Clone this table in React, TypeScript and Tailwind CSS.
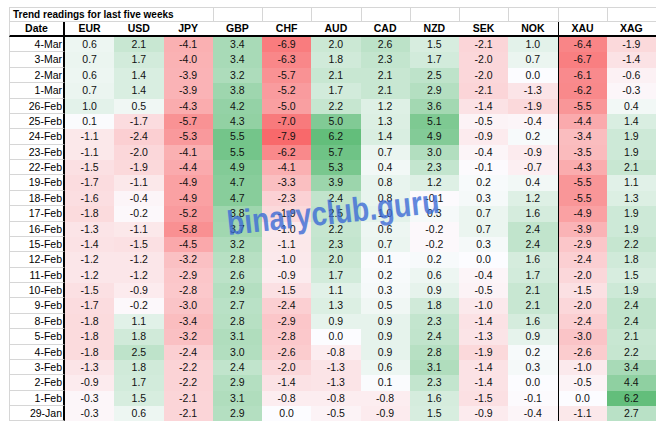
const currencies = ["EUR", "USD", "JPY", "GBP", "CHF", "AUD", "CAD", "NZD", "SEK", "NOK", "XAU", "XAG"];

const rows: [string, number[]][] = [
  ["4-Mar", [0.6, 2.1, -4.1, 3.4, -6.9, 2.0, 2.6, 1.5, -2.1, 1.0, -6.4, -1.9]],
  ["3-Mar", [0.7, 1.7, -4.0, 3.4, -6.3, 1.8, 2.3, 1.7, -2.0, 0.7, -6.7, -1.4]],
  ["2-Mar", [0.6, 1.4, -3.9, 3.2, -5.7, 2.1, 2.1, 2.5, -2.0, 0.0, -6.1, -0.6]],
  ["1-Mar", [0.7, 1.4, -3.9, 3.8, -5.2, 1.7, 2.1, 2.9, -2.1, -1.3, -6.2, -0.3]],
  ["26-Feb", [1.0, 0.5, -4.3, 4.2, -5.0, 2.2, 1.2, 3.6, -1.4, -1.9, -5.5, 0.4]],
  ["25-Feb", [0.1, -1.7, -5.7, 4.3, -7.0, 5.0, 1.3, 5.1, -0.5, -0.4, -4.4, 1.4]],
  ["24-Feb", [-1.1, -2.4, -5.3, 5.5, -7.9, 6.2, 1.4, 4.9, -0.9, 0.2, -3.4, 1.9]],
  ["23-Feb", [-1.1, -2.0, -4.1, 5.5, -6.2, 5.7, 0.7, 3.0, -0.4, -0.9, -3.5, 1.9]],
  ["22-Feb", [-1.5, -1.9, -4.4, 4.9, -4.1, 5.3, 0.4, 2.3, -0.1, -0.7, -4.3, 2.1]],
  ["19-Feb", [-1.7, -1.1, -4.9, 4.7, -3.3, 3.9, 0.8, 1.2, 0.2, 0.4, -5.5, 1.1]],
  ["18-Feb", [-1.6, -0.4, -4.9, 4.7, -2.3, 2.4, 0.8, -0.1, 0.3, 1.2, -5.5, 1.3]],
  ["17-Feb", [-1.8, -0.2, -5.2, 3.8, -1.9, 2.5, 1.0, 0.3, 0.7, 1.6, -4.9, 1.9]],
  ["16-Feb", [-1.3, -1.1, -5.8, 3.7, -1.0, 2.2, 0.6, -0.2, 0.7, 2.4, -3.9, 1.9]],
  ["15-Feb", [-1.4, -1.5, -4.5, 3.2, -1.1, 2.3, 0.7, -0.2, 0.3, 2.4, -2.9, 2.2]],
  ["12-Feb", [-1.2, -1.2, -3.2, 2.8, -1.0, 2.0, 0.1, 0.2, 0.0, 1.6, -2.4, 1.8]],
  ["11-Feb", [-1.2, -1.2, -2.9, 2.6, -0.9, 1.7, 0.2, 0.6, -0.4, 1.7, -2.0, 1.5]],
  ["10-Feb", [-1.5, -0.9, -2.8, 2.9, -1.5, 1.1, 0.3, 0.9, -0.5, 2.1, -1.5, 1.9]],
  ["9-Feb", [-1.7, -0.2, -3.0, 2.7, -2.4, 1.3, 0.5, 1.8, -1.0, 2.1, -2.0, 2.4]],
  ["8-Feb", [-1.8, 1.1, -3.4, 2.8, -2.9, 0.9, 0.9, 2.3, -1.4, 1.6, -2.4, 2.4]],
  ["5-Feb", [-1.8, 1.8, -3.2, 3.1, -2.8, 0.0, 0.9, 2.4, -1.3, 0.9, -3.0, 2.1]],
  ["4-Feb", [-1.8, 2.5, -2.4, 3.0, -2.6, -0.8, 0.9, 2.8, -1.9, 0.2, -2.6, 2.2]],
  ["3-Feb", [-1.3, 1.8, -2.2, 2.4, -2.0, -1.3, 0.6, 3.1, -1.4, 0.3, -1.0, 3.4]],
  ["2-Feb", [-0.9, 1.7, -2.2, 2.9, -1.4, -1.3, 0.1, 2.3, -1.4, 0.0, -0.5, 4.4]],
  ["1-Feb", [-0.3, 1.5, -2.1, 3.1, -0.8, -0.8, -0.8, 1.6, -1.5, -0.1, 0.0, 6.2]],
  ["29-Jan", [-0.3, 0.6, -2.1, 2.9, 0.0, -0.5, -0.9, 1.5, -0.9, -0.4, -1.1, 2.7]],
];

// red / white / green scale like the spreadsheet's conditional formatting
const minVal = -7.9;
const maxVal = 6.2;

const cellColor = (v: number) => {
  const mid = [252, 252, 255];
  const end = v < 0 ? [248, 105, 107] : [99, 190, 123];
  const t = v < 0 ? Math.min(v / minVal, 1) : Math.min(v / maxVal, 1);
  const c = mid.map((m, i) => Math.round(m + (end[i] - m) * t));
  return `rgb(${c.join(",")})`;
};

const App = () => {
  return (
    <div className="min-h-screen bg-white pl-[9px] pt-[7px] text-black font-['Liberation_Sans',Arial,sans-serif]">
      <div className="relative w-[648px]">
        <div className="grid grid-cols-[56px_repeat(12,49.25px)]">
          {/* title row */}
          <div className="col-span-4 h-[15px] border-y border-l border-[#d6d6d6] pl-[3px] text-[10px] font-bold leading-[14px] whitespace-nowrap">
            Trend readings for last five weeks
          </div>
          {currencies.slice(3).map((c) => (
            <div key={c} className="h-[15px] border-y border-l border-[#d6d6d6] last:border-r" />
          ))}

          {/* header row */}
          <div className="h-[15px] border-b-2 border-r-2 border-l border-l-[#d6d6d6] border-b-black border-r-black text-center text-[10.5px] font-bold leading-[13px]">
            Date
          </div>
          {currencies.map((c) => (
            <div
              key={c}
              className={`h-[15px] border-b-2 border-black text-center text-[10.5px] font-bold leading-[13px] ${
                c === "XAU" ? "border-l" : ""
              }`}
            >
              {c}
            </div>
          ))}

          {/* data rows */}
          {rows.map(([date, values]) => (
            <div key={date} className="contents">
              <div className="h-[15.375px] border-b border-l border-r-2 border-[#d6d6d6] border-r-black pr-[1px] text-right text-[10.5px] leading-[14.4px]">
                {date}
              </div>
              {values.map((v, i) => (
                <div
                  key={i}
                  className={`h-[15.375px] text-center text-[10.5px] leading-[15.4px] text-[#111] ${
                    i === 10 ? "border-l border-black" : ""
                  }`}
                  style={{ backgroundColor: cellColor(v) }}
                >
                  {v.toFixed(1)}
                </div>
              ))}
            </div>
          ))}
        </div>

        {/* watermark */}
        <div className="pointer-events-none absolute left-[218px] top-[199px] origin-left [transform:rotate(-6deg)_scaleX(0.83)] whitespace-nowrap text-[34px] font-bold leading-none text-[#3d6cd6] opacity-80">
          binaryclub.guru
        </div>
      </div>
    </div>
  );
};

export default App;
